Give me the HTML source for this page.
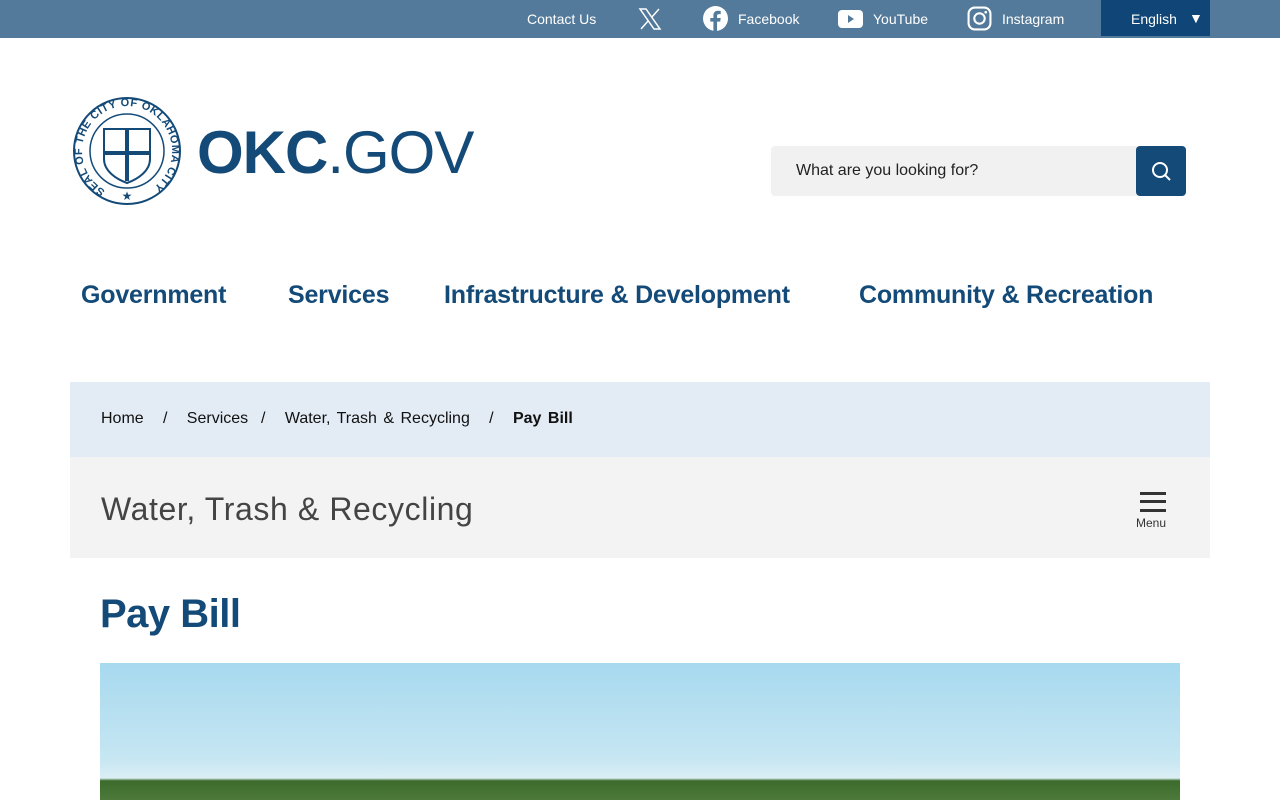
<!DOCTYPE html>
<html><head><meta charset="utf-8"><style>
*{margin:0;padding:0;box-sizing:border-box}
body{width:1280px;height:800px;overflow:hidden;background:#fff;font-family:"Liberation Sans",sans-serif;position:relative}
.top{position:absolute;left:0;top:0;width:1280px;height:38px;background:#537a9b;color:#fff;font-size:14px}
.top span{position:absolute;top:11px}
.lang{position:absolute;left:1101px;top:0;width:109px;height:36px;background:#0f4677}
.a{position:absolute}
.nav{position:absolute;top:281px;font-size:25px;font-weight:bold;color:#144a78;letter-spacing:-0.2px}
</style></head><body>
<div class="top">
<span style="left:527px">Contact Us</span>
<svg class="a" style="left:638px;top:7px" width="24" height="24" viewBox="0 0 24 24"><path d="M2 2h6l14 20h-6z" fill="none" stroke="#fff" stroke-width="1.5"/><path d="M21 2L13.5 10.5M3 22l7.5-8.5" stroke="#fff" stroke-width="1.5"/></svg>
<svg class="a" style="left:703px;top:6px" width="25" height="25" viewBox="0 0 24 24"><circle cx="12" cy="12" r="12" fill="#fff"/><path d="M13.5 24V15h3l.5-3.5h-3.5V9.5c0-1 .4-1.7 1.8-1.7H17V4.7c-.4 0-1.5-.2-2.7-.2-2.6 0-4.3 1.6-4.3 4.5v2.5H7V15h3v9z" fill="#537a9b"/></svg>
<span style="left:738px">Facebook</span>
<svg class="a" style="left:838px;top:10px" width="25" height="18" viewBox="0 0 25 18"><rect width="25" height="18" rx="4" fill="#fff"/><path d="M10 5v8l6-4z" fill="#537a9b"/></svg>
<span style="left:873px">YouTube</span>
<svg class="a" style="left:967px;top:6px" width="25" height="25" viewBox="0 0 24 24"><rect x="1.5" y="1.5" width="21" height="21" rx="6" fill="none" stroke="#fff" stroke-width="2"/><circle cx="12" cy="12" r="5" fill="none" stroke="#fff" stroke-width="2"/><circle cx="18" cy="6" r="1.3" fill="#fff"/></svg>
<span style="left:1002px">Instagram</span>
<div class="lang"><span style="left:30px;top:11px">English</span><span style="left:88px;top:10px">▼</span></div>
</div>
<svg class="a" style="left:72px;top:96px" width="110" height="110" viewBox="0 0 110 110"><defs><path id="c" d="M55 100A45 45 0 1 1 55.1 100"/></defs><circle cx="55" cy="55" r="53" fill="none" stroke="#144a78" stroke-width="2"/><circle cx="55" cy="55" r="37" fill="none" stroke="#144a78" stroke-width="1.5"/><text font-size="11" fill="#144a78" font-weight="bold" letter-spacing="0.5"><textPath href="#c" startOffset="8%">SEAL OF THE CITY OF OKLAHOMA CITY</textPath></text><path d="M32 33h46v30c0 12-12 20-23 24-11-4-23-12-23-24z" fill="none" stroke="#144a78" stroke-width="2"/><path d="M55 33v52M32 57h46" stroke="#144a78" stroke-width="4"/><text x="55" y="104" font-size="12" text-anchor="middle" fill="#144a78">★</text></svg>
<div class="a" style="left:197px;top:118px;font-size:60px;color:#144a78;letter-spacing:-1px"><b>OKC</b>.GOV</div>
<div class="a" style="left:771px;top:146px;width:366px;height:50px;background:#f1f1f1;border-radius:4px 0 0 4px;font-size:16px;color:#222;padding:16px 25px">What are you looking for?</div>
<div class="a" style="left:1136px;top:146px;width:50px;height:50px;background:#144a78;border-radius:4px"><svg width="50" height="50"><circle cx="24" cy="24" r="7" fill="none" stroke="#fff" stroke-width="2"/><path d="M29 29l5 5" stroke="#fff" stroke-width="2"/></svg></div>
<div class="nav" style="left:81px">Government</div>
<div class="nav" style="left:288px">Services</div>
<div class="nav" style="left:444px">Infrastructure &amp; Development</div>
<div class="nav" style="left:859px">Community &amp; Recreation</div>
<div class="a" style="left:70px;top:382px;width:1140px;height:75px;background:#e3ecf5;font-size:16px;color:#111;padding:28px 31px;word-spacing:2px">Home &nbsp; / &nbsp; Services &nbsp;/ &nbsp; Water, Trash &amp; Recycling &nbsp; / &nbsp; <b>Pay Bill</b></div>
<div class="a" style="left:70px;top:457px;width:1140px;height:101px;background:#f3f3f3"><div class="a" style="left:31px;top:34px;font-size:32px;color:#444;letter-spacing:0.6px">Water, Trash &amp; Recycling</div>
<div class="a" style="left:1070px;top:35px;width:26px;height:20px;border-top:3px solid #333;border-bottom:3px solid #333"><div style="margin-top:5px;height:3px;background:#333"></div></div>
<div class="a" style="left:1066px;top:59px;font-size:12px;color:#333">Menu</div></div>
<div class="a" style="left:100px;top:592px;font-size:40px;font-weight:bold;color:#144a78;letter-spacing:-0.5px">Pay Bill</div>
<div class="a" style="left:100px;top:663px;width:1080px;height:137px;background:linear-gradient(#a7d9ef 0%,#c6e6f2 70%,#dbeef4 84%,#3c6b2c 86%,#4d7a3a 100%)"></div>
</body></html>
